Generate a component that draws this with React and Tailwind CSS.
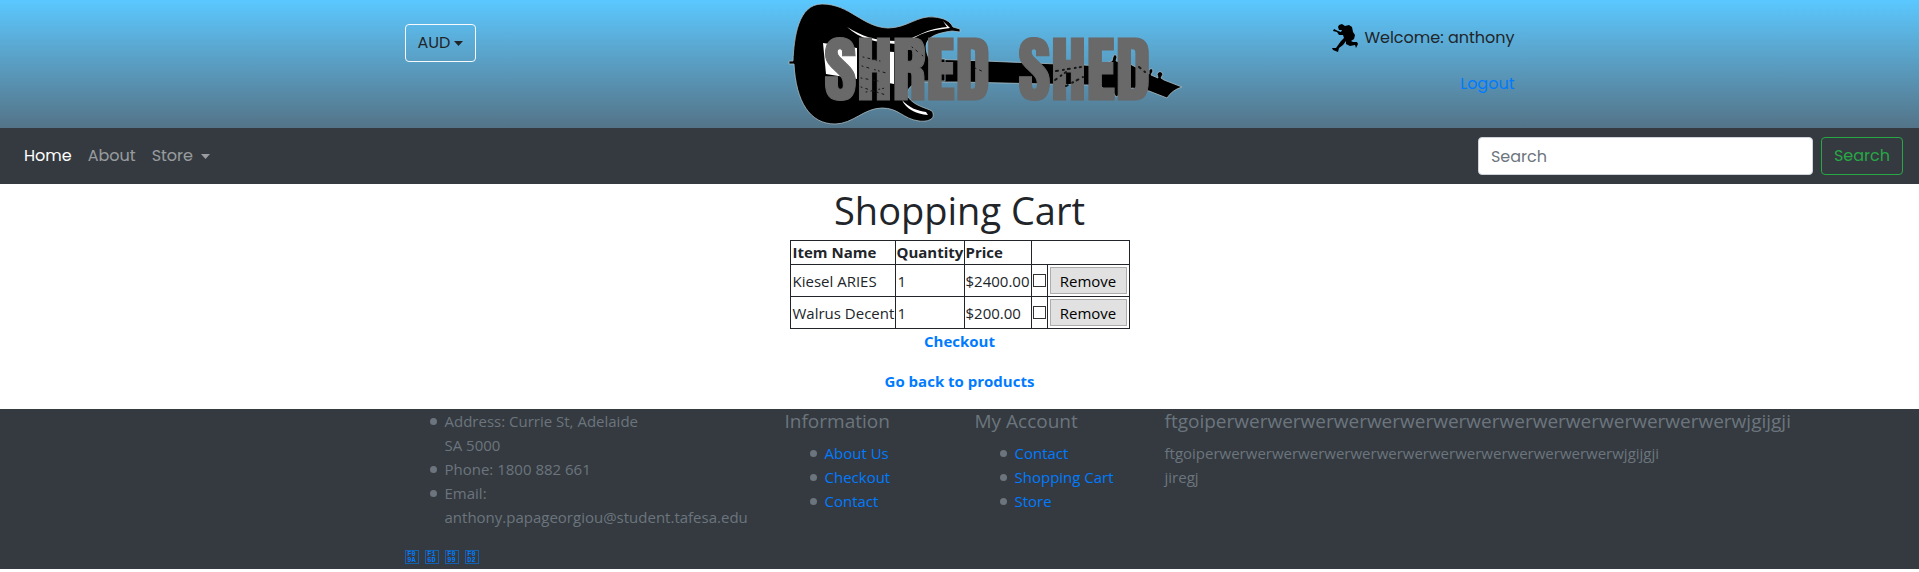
const SOCIAL = [
  { name: "Facebook", top: "F0", bottom: "9A" },
  { name: "Instagram", top: "F1", bottom: "6D" },
  { name: "Twitter", top: "F0", bottom: "99" },
  { name: "Pinterest", top: "F0", bottom: "D2" },
];

const ITEMS = [
  { name: "Kiesel ARIES", quantity: 1, price: "$2400.00" },
  { name: "Walrus Decent", quantity: 1, price: "$200.00" },
];

const poppins = "font-[Poppins,Inter,sans-serif]";
const bullet =
  "flex gap-2 before:mt-[9px] before:size-[7px] before:shrink-0 before:rounded-full before:bg-[#6c757d] before:content-['']";

function Caret() {
  return (
    <svg width="9" height="5" viewBox="0 0 9 5" fill="currentColor" aria-hidden="true">
      <path d="M0 0h9L4.5 5z" />
    </svg>
  );
}

function Logo() {
  return (
    <svg className="block w-[400px] max-w-none shrink-0" height="128" viewBox="785 0 400 128" role="img" aria-label="Shred Shed">
      <g stroke="#a9bcc4" strokeWidth="0.8" strokeLinejoin="round">
        <path d="M920 59 L960 60 L1106 66 L1108 62 L1112 61 L1113 57 Q1115 52 1117 57 L1116 61 L1130 64 L1149 74 L1149 70 Q1152 67 1153 71 L1151 75 L1158 78 L1157 74 Q1160 69 1163 74 L1161 78 L1164 80 L1182 87 Q1172 90 1167 98 L1149 91 L1132 88 L1116 97 L1112 90 Q1105 92 1101 86 L1088 85 L960 82 L920 82 Z" />
        <path d="M789 61 H793 C794 38 798 4 822 4 C850 4 862 27 888 28 C907 28 918 15 934 17 C944 18 950 21 953 27 L960 29 V32 L952 31 C938 33 927 36 926 46 C926 52 928 56 929 59 H945 V81 H922 C911 84 905 90 908 97 C914 106 927 108 932 111 C937 120 926 122 919 121 C903 119 899 108 882 108 C864 108 853 124 835 124 C810 124 796 102 794 64 H789 Z" />
      </g>
      <g fill="#fff">
        <path d="M847 27 C862 36 875 41 897 41 C913 42 921 29 947 27 L943 21 L950 28 L936 30 C916 33 910 44 896 44 C875 42 860 39 847 27 Z" />
        <path d="M823 43 L857 48 V79 L826 74 Z" />
        <path d="M878 51 L894 52 V84 L878 81 Z" />
        <path d="M902 100 C909 108 918 111 926 112 L928 115 C916 114 906 109 902 100 Z" />
      </g>
      <g
        fontFamily="Anton, Oswald, 'Liberation Sans', sans-serif"
        fontSize="71"
        fontWeight="400"
        fill="#696969"
        stroke="#696969"
        strokeWidth="1"
      >
        <text x="824" y="100">SHRED</text>
        <text x="1018" y="100">SHED</text>
      </g>
      <g fill="none" stroke="#171717" strokeLinecap="round">
        <path strokeWidth="1" strokeDasharray="1 4 2 6 1 3" d="M863 57 L880 61 M862 66 L886 73 M861 78 L878 81 M861 87 L889 96 M866 92 L885 88 M912 47 L923 56 M975 68 L984 72" />
        <path strokeWidth="2" strokeDasharray="2 5 1 4" d="M1055 80 L1066 72 M1056 71 L1081 67 M1066 86 L1083 77 M1139 67 L1145 72" />
      </g>
    </svg>
  );
}

function Runner() {
  return (
    <svg width="26" height="28" viewBox="0 0 26 28" aria-hidden="true">
      <path d="M6 3 L7 1 L10 0 L13 2 L17 1 L20 3 L21 8 L23 11 L22 15 L19 17 L21 18 L25 18 L26 20 L24 24 L23 21 L18 22 L14 20 L14 17 L11 21 L7 24 L6 28 L1 26 L0 24 L4 24 L9 17 L12 14 L11 11 L7 11 L5 8 L1 7 L2 5 L6 7 L9 8 L10 6 L7 6 Z" />
    </svg>
  );
}

function FooterLinks({ title, links }) {
  return (
    <nav className="px-[15px]" aria-label={title}>
      <h5 className="mb-2 text-[19px] leading-6">{title}</h5>
      <ul className="pl-[25px]">
        {links.map((l) => (
          <li key={l} className={bullet}>
            <a href="#" className="text-[#007bff]">{l}</a>
          </li>
        ))}
      </ul>
    </nav>
  );
}

export default function App() {
  return (
    <div className="bg-white font-['Segoe_UI','Open_Sans',sans-serif] text-[15px] leading-6 text-[#212529]">
      <header className={`bg-linear-to-b from-[#5ac8ff] to-[#537488] text-base ${poppins}`}>
        <div className="mx-auto grid h-32 max-w-[1140px] grid-cols-3">
          <div className="px-[15px] pt-6">
            <button className="flex h-[38px] items-center gap-1 rounded border border-[#f8f9fa] px-3">
              AUD <Caret />
            </button>
          </div>
          <div className="flex px-[15px]">
            <Logo />
          </div>
          <div className="flex flex-col items-end gap-5 px-[15px] pt-6">
            <p className="flex h-7 items-center gap-1.5">
              <Runner /> Welcome: anthony
            </p>
            <a href="#" className="text-[#007bff]">Logout</a>
          </div>
        </div>
      </header>

      <nav className={`flex items-center justify-between bg-[#343a40] px-4 py-2 text-base ${poppins}`}>
        <div className="flex text-white/50">
          <a href="#" className="p-2 text-white">Home</a>
          <a href="#" className="p-2">About</a>
          <a href="#" className="flex items-center gap-2 p-2">Store <Caret /></a>
        </div>
        <form className="flex gap-2">
          <input
            type="search"
            aria-label="Search"
            placeholder="Search"
            className="h-[38px] w-[335px] rounded border border-[#ced4da] bg-white px-3 placeholder:text-[#6c757d]"
          />
          <button type="button" className="h-[38px] rounded border border-[#28a745] px-3 text-[#28a745]">
            Search
          </button>
        </form>
      </nav>

      <main className="flex flex-col items-center">
        <h1 className="mb-1 text-[38px] leading-[52px]">Shopping Cart</h1>
        <table className="w-[340px] table-fixed border-collapse border border-[#212529] [&_td]:border [&_td]:border-[#212529] [&_th]:border [&_th]:border-[#212529]">
          <colgroup>
            <col className="w-[105px]" />
            <col className="w-[69px]" />
            <col className="w-[67px]" />
            <col className="w-[16px]" />
            <col />
          </colgroup>
          <thead>
            <tr className="h-6 text-left leading-[23px]">
              <th className="pl-0.5">Item Name</th>
              <th className="pl-px">Quantity</th>
              <th className="pl-px">Price</th>
              <th colSpan={2} aria-label="Actions" />
            </tr>
          </thead>
          <tbody>
            {ITEMS.map((item) => (
              <tr key={item.name} className="h-8 whitespace-nowrap">
                <td className="pl-0.5">{item.name}</td>
                <td className="pl-0.5">{item.quantity}</td>
                <td className="pl-px">{item.price}</td>
                <td>
                  <input
                    type="checkbox"
                    aria-label={`Select ${item.name}`}
                    className="mx-auto block size-[13px] appearance-none border border-[#333] bg-white checked:bg-[#333]"
                  />
                </td>
                <td className="px-0.5">
                  <button className="block h-[27px] w-full border border-[#adadad] bg-[#e1e1e1] text-black">Remove</button>
                </td>
              </tr>
            ))}
          </tbody>
        </table>
        <a href="#" className="mb-4 font-bold text-[#007bff]">Checkout</a>
        <a href="#" className="mb-4 font-bold text-[#007bff]">Go back to products</a>
      </main>

      <footer className="bg-[#343a40] text-[#6c757d]">
        <div className="mx-auto grid max-w-[1140px] grid-cols-[2fr_1fr_1fr_2fr]">
          <div className="min-w-0 px-[15px]">
            <ul className="mb-4 pl-[25px]">
              <li className={bullet}><span>Address: Currie St, Adelaide<br />SA 5000</span></li>
              <li className={bullet}>Phone: 1800 882 661</li>
              <li className={bullet}><span>Email:<br />anthony.papageorgiou@student.tafesa.edu</span></li>
            </ul>
            <div className="flex h-6 items-center gap-1.5">
              {SOCIAL.map((s) => (
                <a
                  key={s.name}
                  href="#"
                  aria-label={s.name}
                  className="flex size-3.5 flex-col items-center justify-center border border-[#1361b0] font-['Liberation_Mono',monospace] text-[7px] leading-[6px] font-bold text-[#007bff]"
                >
                  <span>{s.top}</span>
                  <span>{s.bottom}</span>
                </a>
              ))}
            </div>
          </div>
          <FooterLinks title="Information" links={["About Us", "Checkout", "Contact"]} />
          <FooterLinks title="My Account" links={["Contact", "Shopping Cart", "Store"]} />
          <div className="min-w-0 px-[15px] whitespace-nowrap">
            <h5 className="mb-2 text-[19px] leading-6">ftgoiperwerwerwerwerwerwerwerwerwerwerwerwerwerwerwerwjgijgji</h5>
            <p>ftgoiperwerwerwerwerwerwerwerwerwerwerwerwerwerwerwerwjgijgji<br />jiregj</p>
          </div>
        </div>
      </footer>
    </div>
  );
}
